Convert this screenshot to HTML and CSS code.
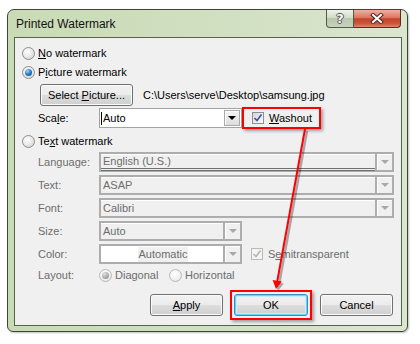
FILE: index.html
```html
<!DOCTYPE html>
<html lang="en">
<head>
  <meta charset="UTF-8" />
  <title>Printed Watermark</title>
  <link rel="stylesheet" href="styles.css">
</head>
<body>
  <div class="dialog">
    <div class="titlebar">
      <span class="title">Printed Watermark</span>
      <div class="caption">
        <span class="cap help">?</span>
        <span class="cap close">
          <svg width="14" height="11" viewBox="0 0 14 11">
            <path d="M3 2 L11 9 M11 2 L3 9" stroke="#4a2a22" stroke-width="4" stroke-linecap="square" />
            <path d="M3 2 L11 9 M11 2 L3 9" stroke="#fff" stroke-width="2" stroke-linecap="square" />
          </svg>
        </span>
      </div>
    </div>

    <div class="content">
      <div class="row r-radio first">
        <span class="radio"></span><span><u>N</u>o watermark</span>
      </div>
      <div class="row r-radio">
        <span class="radio on"></span><span>P<u>i</u>cture watermark</span>
      </div>
      <div class="row r-btn">
        <button class="btn sel-pic">Select <u>P</u>icture...</button>
        <span class="path">C:\Users\serve\Desktop\samsung.jpg</span>
      </div>
      <div class="row r-field r-scale">
        <span class="label">Sca<u>l</u>e:</span>
        <div class="combo short on">
          <span class="val"><i class="caret"></i>Auto</span>
          <span class="drop"><span class="tri"></span></span>
        </div>
        <div class="wash">
          <span class="check">
            <svg width="10" height="10" viewBox="0 0 10 10"><path d="M1.5 5 L4 7.5 L8.5 1.5" fill="none" stroke="#3552b0" stroke-width="1.6" /></svg>
          </span>
          <span><u>W</u>ashout</span>
        </div>
      </div>
      <div class="row r-radio r-textwm">
        <span class="radio"></span><span>Te<u>x</u>t watermark</span>
      </div>

      <div class="row r-field">
        <span class="label">Language:</span>
        <div class="combo full lang">
          <span class="val">English (U.S.)</span>
          <span class="drop"><span class="tri"></span></span>
        </div>
      </div>
      <div class="row r-field">
        <span class="label">Text:</span>
        <div class="combo full">
          <span class="val">ASAP</span>
          <span class="drop"><span class="tri"></span></span>
        </div>
      </div>
      <div class="row r-field">
        <span class="label">Font:</span>
        <div class="combo full">
          <span class="val">Calibri</span>
          <span class="drop"><span class="tri"></span></span>
        </div>
      </div>
      <div class="row r-field">
        <span class="label">Size:</span>
        <div class="combo short">
          <span class="val">Auto</span>
          <span class="drop"><span class="tri"></span></span>
        </div>
      </div>
      <div class="row r-field">
        <span class="label">Color:</span>
        <div class="combo short white">
          <span class="val"><span class="hi">Automatic</span></span>
          <span class="drop"><span class="tri"></span></span>
        </div>
        <div class="semi">
          <span class="check off">
            <svg width="10" height="10" viewBox="0 0 10 10"><path d="M1.5 5 L4 7.5 L8.5 1.5" fill="none" stroke="#b4b4b4" stroke-width="1.6" /></svg>
          </span>
          <span class="dim">S<u>e</u>mitransparent</span>
        </div>
      </div>
      <div class="row r-layout">
        <span class="label">Layout:</span>
        <span class="opt"><span class="radio off on"></span><span class="dim">Diagonal</span></span>
        <span class="opt"><span class="radio off"></span><span class="dim">Horizontal</span></span>
      </div>

      <div class="actions">
        <button class="btn apply"><u>A</u>pply</button>
        <span class="hl"><button class="btn ok">OK</button></span>
        <button class="btn">Cancel</button>
      </div>
    </div>
  </div>

  <svg class="arrow" width="420" height="344" viewBox="0 0 420 344">
    <g opacity="0.3" transform="translate(2,2)">
      <line x1="305" y1="129" x2="277.3" y2="281" stroke="#000" stroke-width="2.5" />
      <polygon points="276,289 272.6,280 281.8,281.6" fill="#000" />
    </g>
    <line x1="305" y1="129" x2="277.3" y2="281" stroke="#ff0000" stroke-width="2" />
    <polygon points="276,289 272.6,280 281.8,281.6" fill="#ff0000" />
  </svg>
</body>
</html>
```

FILE: styles.css
```css
body {
  margin: 0;
  width: 420px;
  height: 344px;
  overflow: hidden;
  position: relative;
  background: #fff;
  font-family: "Liberation Sans", Arial, sans-serif;
  font-size: 11px;
  color: #000;
}

.dialog {
  box-sizing: border-box;
  width: 401px;
  height: 323px;
  margin: 9px 0 0 7px;
  padding: 0 5px 5px 6px;
  border: 1px solid #3c4636;
  border-radius: 7px 7px 6px 6px;
  background: linear-gradient(to right, #c9dbb5 0, #d2e0c3 60%, #dbe6cf 100%);
  display: flex;
  flex-direction: column;
  box-shadow: 1px 1px 2px rgba(0, 0, 0, 0.25);
}

.titlebar {
  height: 27px;
  display: flex;
  align-items: flex-start;
  justify-content: space-between;
}

.title {
  font-size: 12px;
  padding: 7px 0 0 2px;
  color: #111;
}

.caption {
  display: flex;
  margin-right: 1px;
}

.cap {
  box-sizing: border-box;
  height: 18px;
  display: flex;
  align-items: center;
  justify-content: center;
  border: 1px solid #4f5b47;
  border-top: 0;
}

.help {
  width: 28px;
  border-radius: 0 0 0 4px;
  background: linear-gradient(#eef2ea 0, #d3dcc9 45%, #bac7ad 50%, #c7d3bb 100%);
  color: #f6f6f6;
  font: bold 13px "DejaVu Sans", sans-serif;
  text-shadow: 1px 0 0 #555, -1px 0 0 #555, 0 1px 0 #555, 0 -1px 0 #555;
}

.close {
  width: 47px;
  border-left: 0;
  border-color: #5a2d22;
  border-radius: 0 0 4px 0;
  background: linear-gradient(#eeb0a2 0, #dc7560 45%, #c4412a 52%, #cf5638 80%, #e0876b 100%);
}

.content {
  flex: 1;
  border: 1px solid #56644c;
  background: #f0f0f0;
  padding-right: 7px;
}

.row {
  display: flex;
  align-items: center;
}

.r-radio {
  height: 16px;
  margin-top: 3px;
  padding-left: 7px;
}

.first {
  margin-top: 7px;
}

.r-textwm {
  margin-top: 4px;
}

.radio {
  box-sizing: border-box;
  width: 13px;
  height: 13px;
  margin-right: 3px;
  border-radius: 50%;
  border: 1px solid #8f8f8f;
  background: radial-gradient(circle at 40% 35%, #fff 0, #e8e8e8 50%, #cbcbcb 100%);
  position: relative;
}

.radio.on::after {
  content: "";
  position: absolute;
  left: 2px;
  top: 2px;
  width: 7px;
  height: 7px;
  border-radius: 50%;
  background: radial-gradient(circle at 35% 30%, #9ad6ff 0, #1f74c4 55%, #0b3d7c 100%);
}

.radio.off {
  border-color: #b8b8b8;
  background: radial-gradient(circle at 40% 35%, #fff 0, #efefef 60%, #dcdcdc 100%);
}

.radio.off.on::after {
  background: radial-gradient(circle at 35% 30%, #e0e0e0 0, #a8a8a8 60%, #8c8c8c 100%);
}

.r-btn {
  height: 22px;
  margin-top: 4px;
  padding-left: 25px;
}

.btn {
  box-sizing: border-box;
  height: 22px;
  width: 73px;
  padding: 0;
  border: 1px solid #707070;
  border-radius: 3px;
  background: linear-gradient(#f2f2f2 0, #ebebeb 50%, #dddddd 51%, #cfcfcf 100%);
  box-shadow: inset 0 0 0 1px #fbfbfb;
  font: inherit;
  color: #000;
}

.sel-pic {
  width: 93px;
}

.path {
  margin-left: 10px;
}

.r-field {
  height: 20px;
  margin-top: 3px;
  padding-left: 23px;
}

.r-scale {
  height: 22px;
  margin-top: 1px;
}

.label {
  width: 61px;
  color: #6d6d6d;
}

.r-scale .label {
  color: #000;
}

.combo {
  box-sizing: border-box;
  height: 20px;
  display: flex;
  border: 2px solid #adadad;
  background: #f0f0f0;
}

.combo.full {
  width: 295px;
}

.combo.short {
  width: 143px;
}

.combo .val {
  flex: 1;
  padding-left: 2px;
  line-height: 15px;
  color: #6d6d6d;
  border-top: 1px solid #fff;
  display: flex;
  align-items: center;
}

.combo.lang .val {
  height: 13px;
  border-bottom: 3px double #707070;
  line-height: 13px;
}

.combo .drop {
  width: 15px;
  border-left: 2px solid #adadad;
  display: flex;
  align-items: center;
  justify-content: center;
  box-shadow: inset 1px 1px 0 #fff;
}

.tri {
  width: 0;
  height: 0;
  border-left: 4px solid transparent;
  border-right: 4px solid transparent;
  border-top: 4px solid #a8a8a8;
}

.combo.on {
  border: 1px solid #a3a3a3;
  background: #fff;
}

.combo.on .val {
  color: #000;
  border-top: 0;
  padding-left: 1px;
}

.combo.on .drop {
  width: 14px;
  margin: 1px;
  border: 1px solid #a9a9a9;
  background: linear-gradient(#f4f4f4, #dedede);
}

.combo.on .tri {
  border-top-color: #000;
}

.caret {
  width: 1px;
  height: 13px;
  background: #000;
  margin-right: 1px;
}

.combo.white .val {
  background: #fff;
  justify-content: center;
}

.hi {
  background: #f0f0f0;
  color: #6d6d6d;
  padding: 0 1px;
}

.wash {
  box-sizing: border-box;
  width: 79px;
  height: 22px;
  border: 2px solid #ff0000;
  padding-left: 8px;
  display: flex;
  align-items: center;
  box-shadow: 2px 2px 3px rgba(0, 0, 0, 0.35);
}

.check {
  box-sizing: border-box;
  width: 12px;
  height: 12px;
  margin-right: 5px;
  border: 1px solid #8e8f8f;
  background: linear-gradient(135deg, #d6d6d6, #fbfbfb);
  display: flex;
  align-items: center;
  justify-content: center;
}

.check.off {
  border-color: #b9b9b9;
  background: #f4f4f4;
}

.semi {
  display: flex;
  align-items: center;
  margin-left: 9px;
}

.dim {
  color: #6d6d6d;
}

.r-layout {
  height: 16px;
  margin-top: 3px;
  padding-left: 23px;
}

.opt {
  display: flex;
  align-items: center;
  width: 70px;
}

.actions {
  height: 30px;
  margin-top: 7px;
  padding-right: 1px;
  display: flex;
  align-items: center;
  justify-content: flex-end;
}

.apply {
  margin-right: 7px;
}

.hl {
  display: flex;
  padding: 2px;
  margin-right: 8px;
  border: 2px solid #ff0000;
  box-shadow: 2px 2px 3px rgba(0, 0, 0, 0.35);
}

.ok {
  width: 74px;
  border-color: #3c8cc0;
  box-shadow: inset 0 0 0 1px #66d4f5, inset 0 0 0 2px #c9ecf9;
}

.arrow {
  position: absolute;
  left: 0;
  top: 0;
  pointer-events: none;
}
```
